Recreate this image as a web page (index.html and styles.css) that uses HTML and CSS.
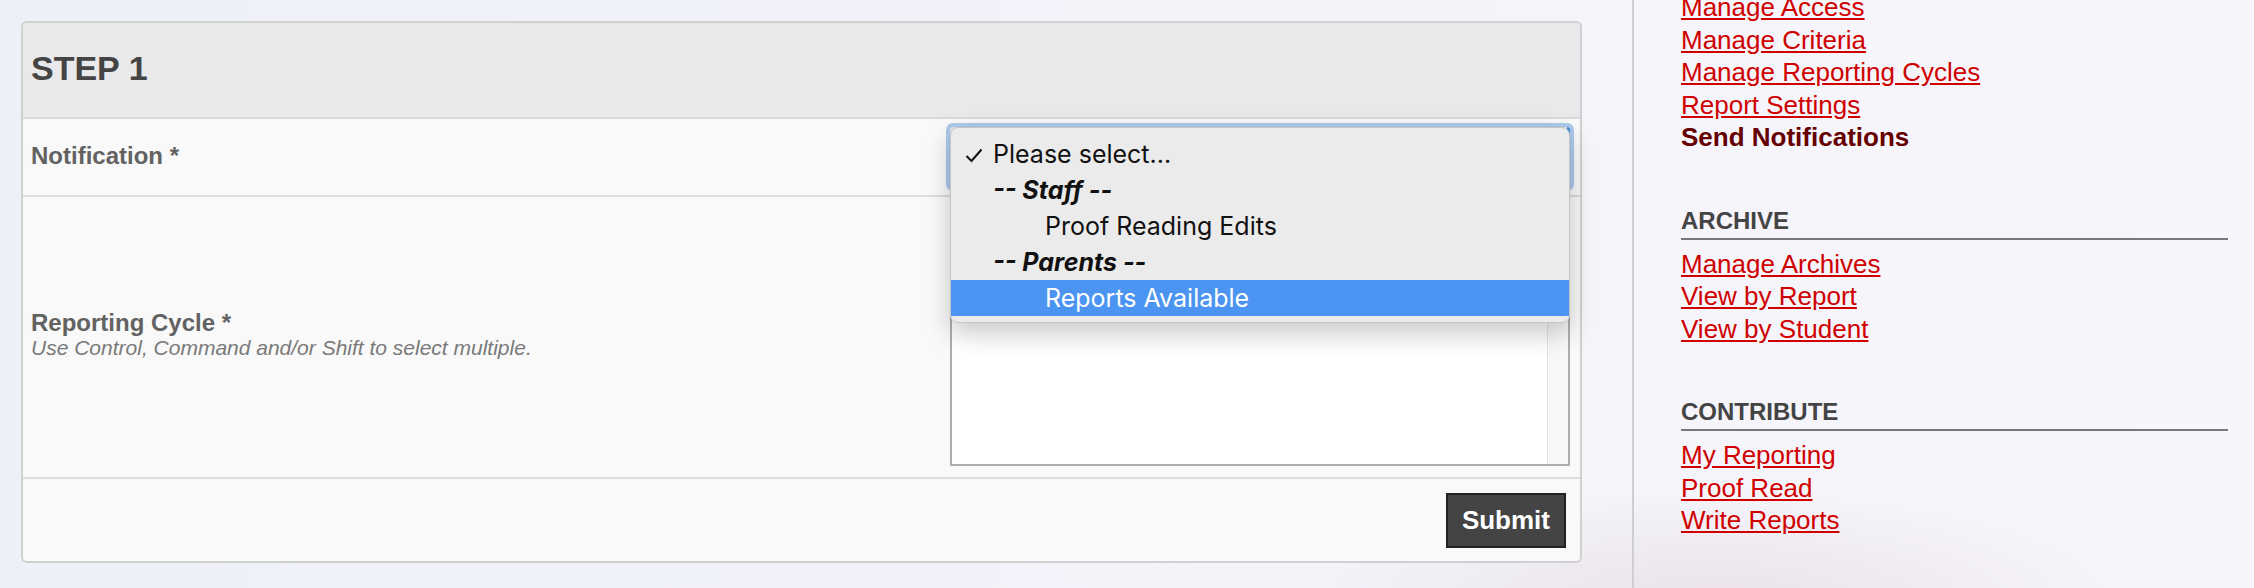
FILE: index.html
```html
<!DOCTYPE html>
<html lang="en">
<head>
    <meta charset="UTF-8">
    <title>Send Notifications</title>
    <link rel="stylesheet" href="styles.css">
</head>
<body>
    <div class="page">
        <main class="content">
            <form class="panel">
                <div class="panel-head">
                    <h2>STEP 1</h2>
                </div>

                <div class="row row-notify">
                    <div class="label-col">
                        <label>Notification *</label>
                    </div>
                    <div class="field-col">
                        <div class="select-wrap">
                            <div class="select"></div>
                            <!-- open dropdown menu -->
                            <ul class="popup">
                                <li class="opt placeholder">
                                    <svg class="check" width="18" height="15" viewBox="0 0 18 15"><polyline points="1.5,8 6.5,13 16.5,1.5" fill="none" stroke="#111" stroke-width="2"/></svg>
                                    Please select...
                                </li>
                                <li class="opt group">-- Staff --</li>
                                <li class="opt child">Proof Reading Edits</li>
                                <li class="opt group">-- Parents --</li>
                                <li class="opt child active">Reports Available</li>
                            </ul>
                        </div>
                    </div>
                </div>

                <div class="row row-cycle">
                    <div class="label-col">
                        <label>Reporting Cycle *</label>
                        <span class="hint">Use Control, Command and/or Shift to select multiple.</span>
                    </div>
                    <div class="field-col">
                        <div class="listbox">
                            <div class="track"></div>
                        </div>
                    </div>
                </div>

                <div class="row row-actions">
                    <button type="button" class="submit">Submit</button>
                </div>
            </form>
        </main>

        <aside class="sidebar">
            <ul class="nav nav-first">
                <li><a href="#">Manage Access</a></li>
                <li><a href="#">Manage Criteria</a></li>
                <li><a href="#">Manage Reporting Cycles</a></li>
                <li><a href="#">Report Settings</a></li>
                <li><span class="current">Send Notifications</span></li>
            </ul>

            <h3>ARCHIVE</h3>
            <ul class="nav">
                <li><a href="#">Manage Archives</a></li>
                <li><a href="#">View by Report</a></li>
                <li><a href="#">View by Student</a></li>
            </ul>

            <h3>CONTRIBUTE</h3>
            <ul class="nav">
                <li><a href="#">My Reporting</a></li>
                <li><a href="#">Proof Read</a></li>
                <li><a href="#">Write Reports</a></li>
            </ul>
        </aside>
    </div>
</body>
</html>
```

FILE: styles.css
```css
html, body {
    height: 100%;
}

body {
    margin: 0;
    font-family: 'Liberation Sans', Arial, sans-serif;
    background:
        radial-gradient(ellipse 420px 110px at 1720px 600px, rgba(215, 190, 205, 0.35), rgba(215, 190, 205, 0)),
        linear-gradient(to right, #eef0f8, #f7f6fb);
    overflow: hidden;
}

.page {
    display: flex;
    min-height: 100vh;
}

/* ---------- main panel ---------- */

.content {
    width: 1561px;
    margin: 21px 0 0 21px;
}

.panel {
    border: 2px solid #d0d0d2;
    border-radius: 6px;
    background-color: #f9f9f9;
}

.panel-head {
    background-color: #e9e9eb;
    border-bottom: 2px solid #d9d9db;
    border-radius: 4px 4px 0 0;
    padding: 25px 8px 29px;
}

.panel-head h2 {
    margin: 0;
    font-size: 34px;
    line-height: 40px;
    color: #444;
}

.row {
    display: flex;
    align-items: center;
    border-bottom: 2px solid #dcdcdc;
    padding: 0 10px 0 8px;
}

.label-col {
    flex: 1;
    margin-bottom: 4px;
}

.label-col label {
    display: block;
    font-size: 24px;
    line-height: 27px;
    font-weight: bold;
    color: #626262;
}

.hint {
    display: block;
    font-size: 21px;
    line-height: 23px;
    font-style: italic;
    color: #7a7a7a;
}

.field-col {
    width: 620px;
}

.row-notify {
    padding-top: 8px;
    padding-bottom: 8px;
}

.row-cycle {
    padding-top: 9px;
    padding-bottom: 11px;
}

.row-actions {
    justify-content: flex-end;
    border-bottom: none;
    padding: 14px 14px 13px 8px;
}

/* ---------- notification select (open) ---------- */

.select-wrap {
    position: relative;
}

.select {
    height: 60px;
    border-radius: 3px;
    background-color: #dfe9f4;
    border-right: 3px solid #3f87dc;
    box-shadow: 0 0 0 4px rgba(120, 170, 225, 0.6);
}

.popup {
    position: absolute;
    top: 0;
    left: 0;
    right: 0;
    z-index: 10;
    margin: 0;
    padding: 8px 0 6px;
    list-style: none;
    background-color: #ebebeb;
    border: 1px solid #c4c4c4;
    border-radius: 8px;
    box-shadow: 0 10px 26px rgba(0, 0, 0, 0.22);
    font-family: Inter, 'Noto Sans', sans-serif;
    font-size: 25px;
    color: #111;
}

.opt {
    position: relative;
    height: 36px;
    line-height: 36px;
    padding-left: 42px;
    white-space: nowrap;
}

.check {
    position: absolute;
    left: 14px;
    top: 12px;
}

.group {
    font-weight: bold;
    font-style: italic;
}

.child {
    padding-left: 94px;
}

.active {
    background-color: #4b94f1;
    color: #fff;
}

/* ---------- reporting cycle listbox ---------- */

.listbox {
    display: flex;
    justify-content: flex-end;
    height: 256px;
    border: 2px solid #adadad;
    background-color: #fff;
}

.track {
    width: 20px;
    background-color: #f8f8f8;
    border-left: 1px solid #e4e4e4;
}

/* ---------- submit ---------- */

.submit {
    height: 55px;
    padding: 0 14px;
    background-color: #444;
    border: 2px solid #222;
    color: #fff;
    font-family: 'Liberation Sans', Arial, sans-serif;
    font-size: 26px;
    font-weight: bold;
    cursor: pointer;
}

/* ---------- sidebar ---------- */

.sidebar {
    flex: 1;
    margin-left: 50px;
    border-left: 2px solid #cfcfd3;
    padding: 0 26px 0 47px;
}

.nav {
    list-style: none;
    margin: 8px 0 0;
    padding: 0;
    font-size: 26px;
    line-height: 32.5px;
}

.nav-first {
    margin-top: -9px;
}

.nav a {
    color: #d00000;
    text-decoration: underline;
}

.current {
    color: #660000;
    font-weight: bold;
}

.sidebar h3 {
    margin: 53px 0 0;
    padding-bottom: 3px;
    border-bottom: 2px solid #78787c;
    font-size: 24px;
    line-height: 28px;
    color: #444;
}
```
